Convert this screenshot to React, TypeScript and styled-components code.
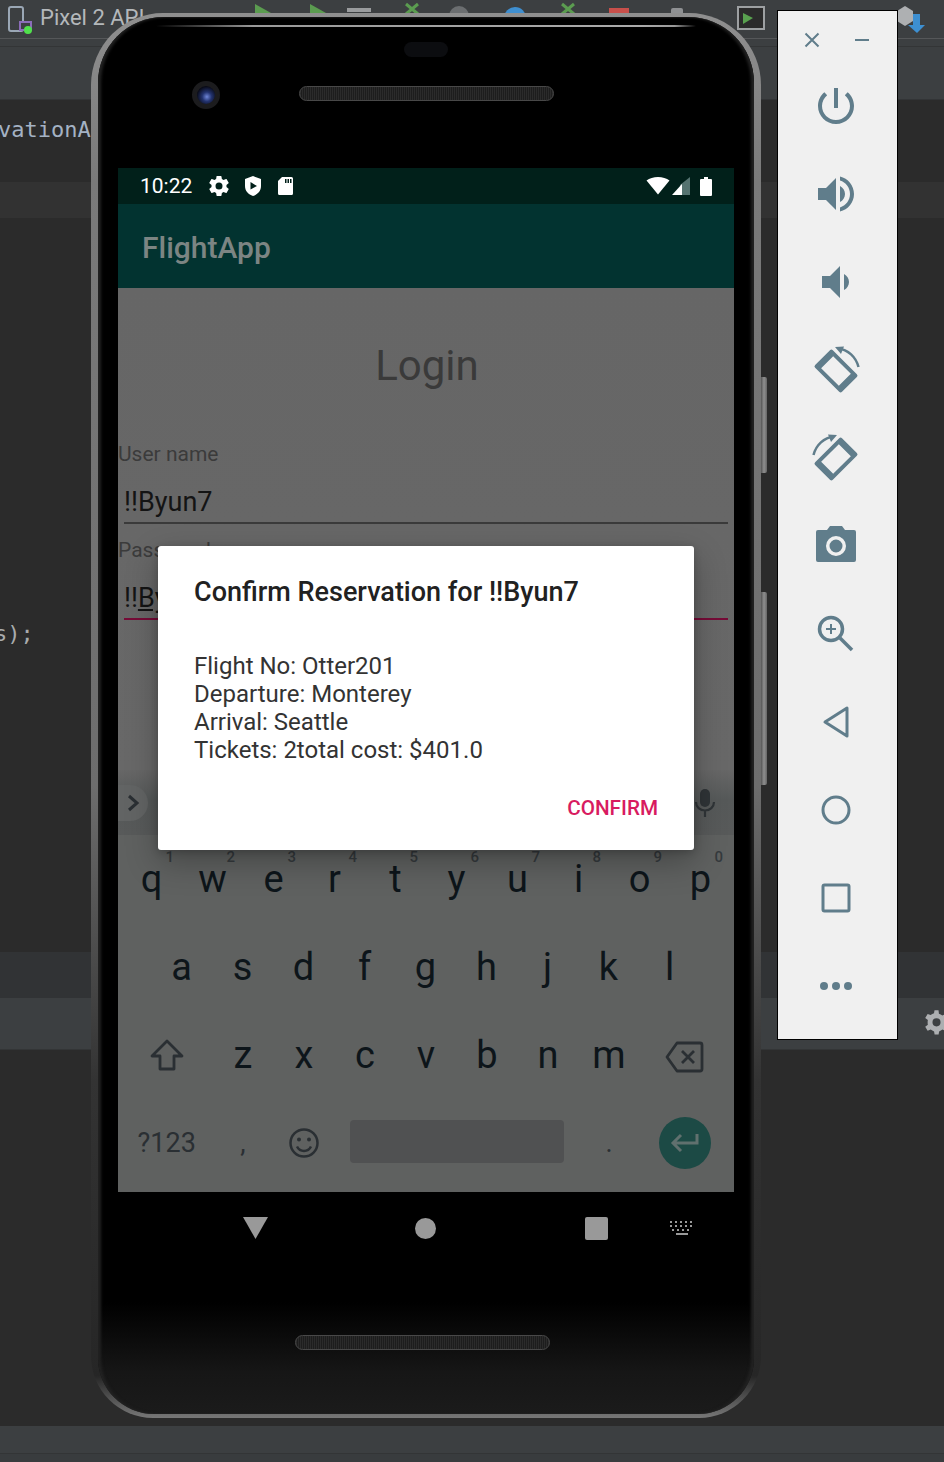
import styled, { createGlobalStyle } from "styled-components"

const GlobalStyle = createGlobalStyle`
    html, body { margin: 0; padding: 0; background: #2b2b2b; }
    body { font-family: Roboto, "Liberation Sans", sans-serif; }
`

const Page = styled.div`
    position: relative;
    width: 944px;
    height: 1462px;
    overflow: hidden;
    display: flex;
    flex-direction: column;
    background: #2b2b2b;
`

/* IDE behind the emulator */
const Toolbar = styled.div`
    height: 39px;
    flex: none;
    box-sizing: border-box;
    display: flex;
    align-items: flex-start;
    background: #3c3f41;
    border-bottom: 1px solid #555759;
`
const ToolIcon = styled.svg<{ $left: number; $top?: number }>`
    flex: none;
    margin-left: ${p => p.$left}px;
    margin-top: ${p => p.$top ?? 0}px;
`
const DeviceName = styled.span`
    flex: none;
    width: 112px;
    margin: 5px 0 0 7px;
    font-size: 22px;
    line-height: 26px;
    white-space: nowrap;
    color: #b4b8bb;
`
const ToolShelf = styled.div`
    height: 8px;
    flex: none;
    box-sizing: border-box;
    background: #3c3f41;
    border-bottom: 1px solid #333536;
`
const TabBar = styled.div`
    height: 53px;
    flex: none;
    box-sizing: border-box;
    background: #3c3f41;
    border-bottom: 1px solid #323436;
`
const Editor = styled.div`
    height: 852px;
    flex: none;
    display: flex;
    flex-direction: column;
    background: #2b2b2b;
    font-family: "DejaVu Sans Mono", "Liberation Mono", monospace;
    font-size: 22px;
`
const CodeLine = styled.div<{ $height: number; $band?: boolean }>`
    height: ${p => p.$height}px;
    flex: none;
    display: flex;
    align-items: center;
    background: ${p => (p.$band ? "#323232" : "transparent")};
`
const CodeText = styled.span<{ $offset: number; $dim?: boolean }>`
    margin-left: ${p => p.$offset}px;
    color: ${p => (p.$dim ? "#a9abad" : "#a4b2c4")};
    white-space: pre;
`
const PanelHead = styled.div`
    height: 46px;
    flex: none;
    background: #313335;
`
const PanelBar = styled.div`
    height: 52px;
    flex: none;
    box-sizing: border-box;
    display: flex;
    justify-content: flex-end;
    align-items: center;
    background: #3c3f41;
    border-bottom: 1px solid #333536;
`
const StatusStrip = styled.div`
    flex: none;
    height: 36px;
    box-sizing: border-box;
    margin-top: auto;
    background: #3c3f41;
    border-bottom: 8px solid #393c3e;
    box-shadow: inset 0 -1px 0 #333536;
`

/* Phone */
const Phone = styled.div`
    position: absolute;
    left: 91px;
    top: 13px;
    width: 670px;
    height: 1405px;
    box-sizing: border-box;
    padding: 4px 7px;
    border-radius: 72px 72px 62px 62px;
    background: linear-gradient(180deg, #8f8f8f 0, #7a7a7a 12%, #6d6d6d 55%, #333 76%, #262626 97%, #777 100%);
`
const SideKey = styled.div<{ $top: number; $height: number }>`
    position: absolute;
    left: 670px;
    top: ${p => p.$top}px;
    width: 6px;
    height: ${p => p.$height}px;
    border-radius: 0 2px 2px 0;
    background: linear-gradient(90deg, #555, #8f8f8f 50%, #666);
`
const Body = styled.div`
    height: 100%;
    display: flex;
    flex-direction: column;
    border-radius: 66px 66px 56px 56px;
    background: linear-gradient(180deg, #000 0, #000 92%, #161616 97%, #1b1b1b 100%);
    box-shadow: inset 3px 0 3px #222, inset -3px 0 3px #222;
    overflow: hidden;
`
const TopBezel = styled.div`
    height: 151px;
    flex: none;
    display: flex;
    flex-direction: column;
    align-items: center;
    padding-top: 8px;
    box-sizing: border-box;
`
const GlassEdge = styled.div`
    width: 540px;
    height: 2px;
    flex: none;
    border-radius: 2px;
    background: linear-gradient(90deg, transparent, #999 18%, #aaa 90%, #999 96%, transparent);
`
const Notch = styled.div`
    width: 44px;
    height: 15px;
    flex: none;
    margin-top: 15px;
    border-radius: 8px;
    background: #0c0d10;
`
const SensorRow = styled.div`
    align-self: stretch;
    display: flex;
    align-items: flex-start;
    margin-top: 24px;
    padding-left: 94px;
`
const CameraLens = styled.div`
    width: 28px;
    height: 28px;
    flex: none;
    box-sizing: border-box;
    border: 5px solid #1c1c1e;
    border-radius: 50%;
    background: radial-gradient(circle at 55% 60%, #6f86d8 0, #23336f 32%, #090b18 70%);
`
const Speaker = styled.div<{ $top: number; $left: number }>`
    width: 255px;
    height: 15px;
    flex: none;
    box-sizing: border-box;
    margin: ${p => p.$top}px 0 0 ${p => p.$left}px;
    border: 1px solid #484848;
    border-radius: 8px;
    background: repeating-linear-gradient(90deg, #2b2b2b 0, #2b2b2b 1px, #1d1d1d 1px, #1d1d1d 2px);
`
const Screen = styled.div`
    position: relative;
    width: 616px;
    height: 1024px;
    flex: none;
    margin-left: 20px;
    display: flex;
    flex-direction: column;
    background: #676767;
    overflow: hidden;
`
const StatusBar = styled.div`
    height: 36px;
    flex: none;
    box-sizing: border-box;
    display: flex;
    align-items: center;
    padding: 0 22px;
    background: #01201a;
    color: #fff;
    font-size: 21px;
`
const Clock = styled.span`
    width: 57px;
    flex: none;
    line-height: 36px;
`
const StatusIcon = styled.svg<{ $gap: number }>`
    flex: none;
    margin-left: ${p => p.$gap}px;
`
const StatusGap = styled.div`
    flex: 1;
`
const AppBar = styled.div`
    height: 84px;
    flex: none;
    box-sizing: border-box;
    display: flex;
    align-items: center;
    padding: 2px 0 0 24px;
    background: #023330;
    color: #7c8583;
    font-size: 30px;
    font-weight: 500;
`
const LoginBody = styled.div`
    height: 482px;
    flex: none;
    display: flex;
    flex-direction: column;
    background: linear-gradient(180deg, #666 0, #686868 100%);
`
const LoginTitle = styled.div`
    height: 154px;
    padding: 50px 0 0 2px;
    box-sizing: border-box;
    flex: none;
    text-align: center;
    font-size: 42px;
    line-height: 56px;
    color: #3a3a3a;
`
const FieldLabel = styled.div`
    height: 24px;
    flex: none;
    font-size: 21px;
    line-height: 24px;
    color: #3b3b3b;
`
const FieldInput = styled.div<{ $focused?: boolean }>`
    height: 58px;
    flex: none;
    box-sizing: border-box;
    margin: 0 6px;
    padding-top: 21px;
    font-size: 27px;
    line-height: 30px;
    color: #141414;
    border-bottom: 2px solid ${p => (p.$focused ? "#760b37" : "#3a3a3a")};
`
const Composing = styled.span`
    text-decoration: underline;
`
const FieldGap = styled.div`
    height: 14px;
    flex: none;
`
const SuggestionStrip = styled.div`
    height: 65px;
    flex: none;
    display: flex;
    align-items: center;
    justify-content: space-between;
    padding-right: 17px;
    background: linear-gradient(180deg, #676767 0, #565959 45%, #585a5a 100%);
`
const ChevronPill = styled.div`
    width: 30px;
    height: 36px;
    display: flex;
    align-items: center;
    justify-content: center;
    border-radius: 0 18px 18px 0;
    background: #626464;
`
const Keyboard = styled.div`
    flex: 1;
    display: flex;
    flex-direction: column;
    padding: 0 3px;
    background: #5f6160;
`
const KeyRow = styled.div<{ $inset?: number }>`
    height: 88px;
    flex: none;
    display: flex;
    padding: 0 ${p => p.$inset ?? 0}px;
`
const Key = styled.div<{ $wide?: number; $dim?: boolean; $size?: number }>`
    position: relative;
    flex: none;
    width: ${p => (p.$wide ?? 1) * 61}px;
    display: flex;
    align-items: center;
    justify-content: center;
    font-size: ${p => p.$size ?? 38}px;
    line-height: 1;
    color: ${p => (p.$dim ? "#2a2f33" : "#0d151a")};
`
const KeyHint = styled.span`
    position: absolute;
    top: 12px;
    right: 8px;
    font-size: 15px;
    line-height: 20px;
    font-weight: 500;
    color: #353a3d;
`
const SpaceBar = styled.div`
    width: 214px;
    height: 43px;
    margin-top: -4px;
    border-radius: 4px;
    background: #505152;
`
const EnterKey = styled.div`
    width: 52px;
    height: 52px;
    display: flex;
    align-items: center;
    justify-content: center;
    border-radius: 50%;
    background: #1c4a45;
`
const Dialog = styled.div`
    position: absolute;
    left: 40px;
    top: 378px;
    width: 536px;
    height: 304px;
    box-sizing: border-box;
    padding: 30px 36px 0;
    display: flex;
    flex-direction: column;
    background: #fff;
    border-radius: 3px;
    box-shadow: 0 12px 32px rgba(0, 0, 0, 0.28), 0 2px 8px rgba(0, 0, 0, 0.2);
`
const DialogTitle = styled.div`
    font-size: 27px;
    line-height: 32px;
    font-weight: 500;
    white-space: nowrap;
    color: #212121;
`
const DialogBody = styled.div`
    margin-top: 44px;
    font-size: 24px;
    line-height: 28px;
    color: #333;
`
const DialogLine = styled.div`
    white-space: nowrap;
`
const DialogActions = styled.div`
    display: flex;
    justify-content: flex-end;
    margin-top: 30px;
`
const ConfirmButton = styled.span`
    font-size: 20.700px;
    line-height: 28px;
    font-weight: 500;
    color: #d81b60;
`
const BottomBezel = styled.div`
    flex: 1;
    display: flex;
    flex-direction: column;
`
const NavRow = styled.div`
    display: flex;
    align-items: center;
    height: 24px;
    margin-top: 24px;
    padding-left: 145px;
`
const NavIcon = styled.svg<{ $gap: number }>`
    flex: none;
    margin-left: ${p => p.$gap}px;
`

/* Emulator side panel */
const SidePanel = styled.div`
    position: absolute;
    left: 777px;
    top: 10px;
    width: 121px;
    height: 1030px;
    box-sizing: border-box;
    display: flex;
    flex-direction: column;
    background: #f0f0f0;
    border: 1px solid #000;
`
const PanelHeader = styled.div`
    height: 51px;
    flex: none;
    display: flex;
    align-items: flex-start;
    padding: 20px 0 0 25px;
    box-sizing: border-box;
    gap: 32px;
`
const PanelButton = styled.div`
    height: 88px;
    flex: none;
    box-sizing: border-box;
    padding-right: 3px;
    display: flex;
    align-items: center;
    justify-content: center;
`

const SLATE = "#607d8b"

const RotateIcon = ({ mirrored }: { mirrored?: boolean }) => (
    <svg width="48" height="48" viewBox="0 0 48 48" style={mirrored ? { transform: "scaleX(-1)" } : undefined}>
        <g transform="rotate(45 24 25)">
            <path
                fillRule="evenodd"
                fill={SLATE}
                d="M5 14.500a2 2 0 0 1 2-2h34a2 2 0 0 1 2 2v21a2 2 0 0 1-2 2H7a2 2 0 0 1-2-2zM11.500 16.500v17h25v-17z"
            />
        </g>
        <path d="M26 2.500C36 3.500 44 11 46.500 21" fill="none" stroke={SLATE} strokeWidth="2.500" />
        <path d="M23 1l9-.5-3 7.500z" fill={SLATE} />
    </svg>
)

const rowOne = [
    ["q", "1"], ["w", "2"], ["e", "3"], ["r", "4"], ["t", "5"],
    ["y", "6"], ["u", "7"], ["i", "8"], ["o", "9"], ["p", "0"],
]
const rowTwo = ["a", "s", "d", "f", "g", "h", "j", "k", "l"]
const rowThree = ["z", "x", "c", "v", "b", "n", "m"]

const App = () => {
    return <Page>
        <GlobalStyle />
        <Toolbar>
            <ToolIcon $left={7} $top={5} width="26" height="30" viewBox="0 0 26 30">
                <rect x="2" y="2" width="14" height="24" rx="2" fill="none" stroke="#9aa7b5" strokeWidth="2" />
                <rect x="13" y="17" width="11" height="8" fill="#3c3f41" stroke="#8b6cb8" strokeWidth="2" />
                <circle cx="21" cy="25" r="4" fill="#50e04c" />
            </ToolIcon>
            <DeviceName>Pixel 2 API</DeviceName>
            <ToolIcon $left={97} width="32" height="16" viewBox="0 0 32 16">
                <path d="M6 4l16 9H6z" fill="#5b9c50" />
            </ToolIcon>
            <ToolIcon $left={23} width="32" height="16" viewBox="0 0 32 16">
                <path d="M6 4l16 9H6z" fill="#5b9c50" />
            </ToolIcon>
            <ToolIcon $left={11} width="24" height="16" viewBox="0 0 24 16">
                <rect x="0" y="8" width="24" height="4" fill="#9a9c9e" />
            </ToolIcon>
            <ToolIcon $left={33} width="16" height="16" viewBox="0 0 16 16">
                <path d="M2 4l12 10M14 4L2 14" stroke="#5b9c50" strokeWidth="3" />
            </ToolIcon>
            <ToolIcon $left={29} width="20" height="16" viewBox="0 0 20 16">
                <circle cx="10" cy="16" r="10" fill="#6b6e70" />
            </ToolIcon>
            <ToolIcon $left={35} width="22" height="16" viewBox="0 0 22 16">
                <circle cx="11" cy="18" r="11" fill="#3f8fd0" />
            </ToolIcon>
            <ToolIcon $left={34} width="16" height="16" viewBox="0 0 16 16">
                <path d="M2 4l12 10M14 4L2 14" stroke="#5b9c50" strokeWidth="3" />
            </ToolIcon>
            <ToolIcon $left={33} width="20" height="16" viewBox="0 0 20 16">
                <rect x="0" y="8" width="20" height="8" fill="#c8504b" />
            </ToolIcon>
            <ToolIcon $left={42} width="12" height="16" viewBox="0 0 12 16">
                <rect x="0" y="8" width="12" height="8" rx="2" fill="#8f9193" />
            </ToolIcon>
            <ToolIcon $left={54} $top={6} width="28" height="26" viewBox="0 0 28 26">
                <rect x="1" y="1" width="26" height="22" fill="#2b2b2b" stroke="#9da0a2" strokeWidth="2" />
                <path d="M6 7l10 5-10 6z" fill="#59a14f" />
            </ToolIcon>
            <ToolIcon $left={131} $top={4} width="30" height="32" viewBox="0 0 30 32">
                <path d="M1 7l8-5 8 5v10l-8 5-8-5z" fill="#aeb0b2" />
                <path d="M17 10v11h-5l9 8 8-8h-5V10z" fill="#3d8fd1" />
            </ToolIcon>
        </Toolbar>
        <ToolShelf />
        <TabBar />
        <Editor>
            <CodeLine $height={58}>
                <CodeText $offset={-2}>vationA</CodeText>
            </CodeLine>
            <CodeLine $height={24} />
            <CodeLine $height={36} $band />
            <CodeLine $height={397} />
            <CodeLine $height={36}>
                <CodeText $offset={-6} $dim>s);</CodeText>
            </CodeLine>
        </Editor>
        <PanelHead />
        <PanelBar>
            <svg width="22" height="30" viewBox="0 0 24 30" style={{ marginRight: -3 }}>
                <path
                    fill="#adafb1"
                    d="M23 15c0-1-.1-1.700-.3-2.500l3.300-2.500-3-5-3.800 1.500c-1.300-1-2.700-1.800-4.200-2.300L14.500 0h-5l-.6 3.700c-1.500.5-2.900 1.300-4.200 2.300L1 4.500l-3 5 3.300 2.500C1.100 12.800 1 13.500 1 15s.1 2.200.3 3L-2 20.500l3 5 3.800-1.500c1.300 1 2.700 1.800 4.200 2.300l.6 3.700h5l.6-3.700c1.500-.5 2.900-1.300 4.200-2.300l3.800 1.500 3-5-3.300-2.500c.2-.8.300-1.500.3-3zM12 20a5 5 0 1 1 0-10 5 5 0 0 1 0 10z"
                    transform="translate(2 0) scale(.88 .88)"
                />
            </svg>
        </PanelBar>
        <StatusStrip />

        <Phone>
            <SideKey $top={364} $height={96} />
            <SideKey $top={579} $height={193} />
            <Body>
                <TopBezel>
                    <GlassEdge />
                    <Notch />
                    <SensorRow>
                        <CameraLens />
                        <Speaker $top={5} $left={79} />
                    </SensorRow>
                </TopBezel>
                <Screen>
                    <StatusBar>
                        <Clock>10:22</Clock>
                        <StatusIcon $gap={10} width="24" height="24" viewBox="0 0 24 24">
                            <path
                                fill="#fff"
                                d="M19.43 12.980c.04-.32.07-.64.07-.98s-.03-.66-.07-.98l2.110-1.650c.19-.15.24-.42.12-.64l-2-3.460c-.12-.22-.39-.3-.61-.22l-2.490 1c-.52-.4-1.080-.73-1.690-.98l-.38-2.650A.488.488 0 0 0 14 2h-4c-.25 0-.46.18-.49.42l-.38 2.650c-.61.25-1.170.59-1.690.98l-2.490-1c-.23-.09-.49 0-.61.22l-2 3.460c-.13.220-.07.490.12.640l2.110 1.650c-.04.32-.07.65-.07.98s.03.66.07.98l-2.110 1.650c-.19.15-.24.42-.12.64l2 3.460c.12.22.39.3.61.22l2.490-1c.52.4 1.080.73 1.690.98l.38 2.650c.03.24.24.42.49.42h4c.25 0 .46-.18.49-.42l.38-2.650c.61-.25 1.170-.59 1.690-.98l2.490 1c.23.09.49 0 .61-.22l2-3.460c.12-.22.07-.49-.12-.64l-2.110-1.650zM12 15.500a3.500 3.500 0 1 1 0-7 3.500 3.500 0 0 1 0 7z"
                            />
                        </StatusIcon>
                        <StatusIcon $gap={12} width="20" height="22" viewBox="0 0 20 22">
                            <path fill="#fff" fillRule="evenodd" d="M10 1l8 3v7c0 5-3.400 8.500-8 10-4.600-1.500-8-5-8-10V4zM7.500 7v7.500L14 11z" />
                        </StatusIcon>
                        <StatusIcon $gap={13} width="18" height="20" viewBox="0 0 18 20">
                            <path fill="#fff" fillRule="evenodd" d="M6 1h9.500A1.500 1.500 0 0 1 17 2.500v15a1.500 1.500 0 0 1-1.500 1.500h-12A1.500 1.500 0 0 1 2 17.500V5zM9 3v4h1.500V3zM11.500 3v4H13V3zM14 3v4h1.500V3z" />
                        </StatusIcon>
                        <StatusGap />
                        <StatusIcon $gap={0} width="24" height="18" viewBox="0 0 24 18">
                            <path fill="#fff" d="M12 17.500L.500 3.500C3.500 1.300 7.500 0 12 0s8.500 1.300 11.500 3.500z" />
                        </StatusIcon>
                        <StatusIcon $gap={2} width="18" height="18" viewBox="0 0 18 18">
                            <path fill="#557370" d="M18 0v18H8V8z" />
                            <path fill="#fff" d="M10 7v11H0z" />
                        </StatusIcon>
                        <StatusIcon $gap={10} width="12" height="19" viewBox="0 0 12 19">
                            <path fill="#fff" d="M4 0h4v2h3a1 1 0 0 1 1 1v15a1 1 0 0 1-1 1H1a1 1 0 0 1-1-1V3a1 1 0 0 1 1-1h3z" />
                        </StatusIcon>
                    </StatusBar>
                    <AppBar>FlightApp</AppBar>
                    <LoginBody>
                        <LoginTitle>Login</LoginTitle>
                        <FieldLabel>User name</FieldLabel>
                        <FieldInput>!!Byun7</FieldInput>
                        <FieldGap />
                        <FieldLabel>Password</FieldLabel>
                        <FieldInput $focused>!!<Composing>Byun7</Composing></FieldInput>
                    </LoginBody>
                    <SuggestionStrip>
                        <ChevronPill>
                            <svg width="20" height="24" viewBox="0 0 20 24">
                                <path d="M6 5l8 7-8 7" fill="none" stroke="#2a2f33" strokeWidth="3" />
                            </svg>
                        </ChevronPill>
                        <svg width="24" height="30" viewBox="0 0 24 30">
                            <rect x="7" y="1" width="10" height="18" rx="5" fill="#2f3437" />
                            <path d="M3 14c0 5 4 8.500 9 8.500s9-3.500 9-8.500M12 22v7" fill="none" stroke="#2f3437" strokeWidth="2.200" />
                        </svg>
                    </SuggestionStrip>
                    <Keyboard>
                        <KeyRow>
                            {rowOne.map(([letter, hint]) => <Key key={letter}>
                                {letter}
                                <KeyHint>{hint}</KeyHint>
                            </Key>)}
                        </KeyRow>
                        <KeyRow $inset={30}>
                            {rowTwo.map(letter => <Key key={letter}>{letter}</Key>)}
                        </KeyRow>
                        <KeyRow>
                            <Key $wide={1.5}>
                                <svg width="36" height="34" viewBox="0 0 36 34">
                                    <path d="M18 3L3 18h8v13h14V18h8z" fill="none" stroke="#2a2f33" strokeWidth="2.800" strokeLinejoin="round" />
                                </svg>
                            </Key>
                            {rowThree.map(letter => <Key key={letter}>{letter}</Key>)}
                            <Key $wide={1.5}>
                                <svg width="40" height="36" viewBox="0 0 40 36">
                                    <path d="M12 6h23a2 2 0 0 1 2 2v24a2 2 0 0 1-2 2H12L2 20z" fill="none" stroke="#2a2f33" strokeWidth="2.800" strokeLinejoin="round" />
                                    <path d="M17 14l12 12M29 14L17 26" stroke="#2a2f33" strokeWidth="2.800" />
                                </svg>
                            </Key>
                        </KeyRow>
                        <KeyRow>
                            <Key $wide={1.5} $size={27} $dim>?123</Key>
                            <Key $size={27} $dim>,</Key>
                            <Key>
                                <svg width="32" height="32" viewBox="0 0 32 32">
                                    <circle cx="16" cy="16" r="13.500" fill="none" stroke="#2a2f33" strokeWidth="2.500" />
                                    <circle cx="11" cy="12.500" r="2" fill="#2a2f33" />
                                    <circle cx="21" cy="12.500" r="2" fill="#2a2f33" />
                                    <path d="M9 19.500c1.500 3 4 4.500 7 4.500s5.500-1.500 7-4.500" fill="none" stroke="#2a2f33" strokeWidth="2.500" />
                                </svg>
                            </Key>
                            <Key $wide={4}><SpaceBar /></Key>
                            <Key $size={27} $dim>.</Key>
                            <Key $wide={1.5}>
                                <EnterKey>
                                    <svg width="30" height="22" viewBox="0 0 30 22">
                                        <path d="M27 2v9H4M11 3l-8 8 8 8" fill="none" stroke="#60706e" strokeWidth="3" />
                                    </svg>
                                </EnterKey>
                            </Key>
                        </KeyRow>
                    </Keyboard>
                    <Dialog>
                        <DialogTitle>Confirm Reservation for !!Byun7</DialogTitle>
                        <DialogBody>
                            <DialogLine>Flight No: Otter201</DialogLine>
                            <DialogLine>Departure: Monterey</DialogLine>
                            <DialogLine>Arrival: Seattle</DialogLine>
                            <DialogLine>Tickets: 2total cost: $401.0</DialogLine>
                        </DialogBody>
                        <DialogActions>
                            <ConfirmButton>CONFIRM</ConfirmButton>
                        </DialogActions>
                    </Dialog>
                </Screen>
                <BottomBezel>
                    <NavRow>
                        <NavIcon $gap={0} width="25" height="22" viewBox="0 0 25 22">
                            <path d="M0 0h25L12.500 22z" fill="#999" />
                        </NavIcon>
                        <NavIcon $gap={147} width="21" height="21" viewBox="0 0 21 21">
                            <circle cx="10.500" cy="10.500" r="10.500" fill="#999" />
                        </NavIcon>
                        <NavIcon $gap={149} width="23" height="23" viewBox="0 0 23 23">
                            <rect width="23" height="23" rx="2" fill="#999" />
                        </NavIcon>
                        <NavIcon $gap={62} width="24" height="14" viewBox="0 0 24 14">
                            <path d="M0 1h24M0 5h24M2 9h20" stroke="#999" strokeWidth="2" strokeDasharray="2 3" />
                            <rect x="6" y="12" width="12" height="2" fill="#999" />
                        </NavIcon>
                    </NavRow>
                    <Speaker $top={95} $left={197} />
                </BottomBezel>
            </Body>
        </Phone>

        <SidePanel>
            <PanelHeader>
                <svg width="18" height="18" viewBox="0 0 18 18">
                    <path d="M2.500 2.500l13 13M15.500 2.500l-13 13" stroke={SLATE} strokeWidth="2" />
                </svg>
                <svg width="18" height="18" viewBox="0 0 18 18">
                    <path d="M2 9h14" stroke={SLATE} strokeWidth="2" />
                </svg>
            </PanelHeader>
            <PanelButton>
                <svg width="48" height="48" viewBox="0 0 24 24">
                    <path fill={SLATE} d="M13 3h-2v10h2V3zm4.830 2.170l-1.420 1.420C17.990 7.860 19 9.810 19 12c0 3.870-3.130 7-7 7s-7-3.130-7-7c0-2.190 1.010-4.140 2.580-5.420L6.170 5.170C4.230 6.820 3 9.260 3 12c0 4.970 4.030 9 9 9s9-4.030 9-9c0-2.740-1.230-5.180-3.170-6.830z" />
                </svg>
            </PanelButton>
            <PanelButton>
                <svg width="48" height="48" viewBox="0 0 24 24">
                    <path fill={SLATE} d="M3 9v6h4l5 5V4L7 9H3zm13.500 3c0-1.770-1.020-3.290-2.500-4.030v8.050c1.480-.73 2.500-2.250 2.500-4.020zM14 3.230v2.060c2.890.86 5 3.540 5 6.710s-2.110 5.850-5 6.710v2.060c4.010-.91 7-4.490 7-8.770s-2.990-7.860-7-8.770z" />
                </svg>
            </PanelButton>
            <PanelButton>
                <svg width="48" height="48" viewBox="0 0 24 24">
                    <path fill={SLATE} d="M18.500 12c0-1.770-1.020-3.290-2.500-4.030v8.050c1.480-.73 2.500-2.250 2.500-4.020zM5 9v6h4l5 5V4L9 9H5z" />
                </svg>
            </PanelButton>
            <PanelButton><RotateIcon /></PanelButton>
            <PanelButton><RotateIcon mirrored /></PanelButton>
            <PanelButton>
                <svg width="48" height="48" viewBox="0 0 48 48">
                    <path
                        fill={SLATE}
                        fillRule="evenodd"
                        d="M6 8h9l3-4h12l3 4h9a2 2 0 0 1 2 2v28a2 2 0 0 1-2 2H6a2 2 0 0 1-2-2V10a2 2 0 0 1 2-2zM24 14a10 10 0 1 0 0 20 10 10 0 0 0 0-20zM24 17.500a6.500 6.500 0 1 1 0 13 6.500 6.500 0 0 1 0-13z"
                    />
                </svg>
            </PanelButton>
            <PanelButton>
                <svg width="48" height="48" viewBox="0 0 48 48">
                    <circle cx="19" cy="19" r="11.500" fill="none" stroke={SLATE} strokeWidth="3.500" />
                    <path d="M28 28l12 12" stroke={SLATE} strokeWidth="3.500" />
                    <path d="M14 19h10M19 14v10" stroke={SLATE} strokeWidth="2" />
                </svg>
            </PanelButton>
            <PanelButton>
                <svg width="48" height="48" viewBox="0 0 48 48">
                    <path d="M35 10v28L13 24z" fill="none" stroke={SLATE} strokeWidth="3" strokeLinejoin="round" />
                </svg>
            </PanelButton>
            <PanelButton>
                <svg width="48" height="48" viewBox="0 0 48 48">
                    <circle cx="24" cy="24" r="13" fill="none" stroke={SLATE} strokeWidth="3" />
                </svg>
            </PanelButton>
            <PanelButton>
                <svg width="48" height="48" viewBox="0 0 48 48">
                    <rect x="11" y="11" width="26" height="26" rx="1.500" fill="none" stroke={SLATE} strokeWidth="3" />
                </svg>
            </PanelButton>
            <PanelButton>
                <svg width="48" height="48" viewBox="0 0 48 48">
                    <circle cx="12" cy="24" r="4" fill={SLATE} />
                    <circle cx="24" cy="24" r="4" fill={SLATE} />
                    <circle cx="36" cy="24" r="4" fill={SLATE} />
                </svg>
            </PanelButton>
        </SidePanel>
    </Page>
}

export default App
